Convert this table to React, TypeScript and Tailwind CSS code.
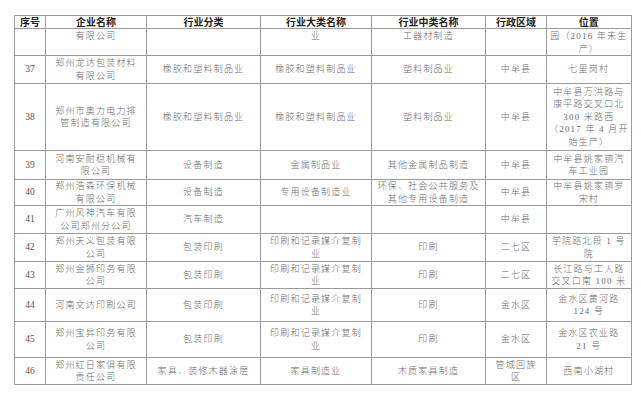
type Row = {
  no: string;
  cells: string[][];
  h: number;
  top?: boolean;
};

const headers = ["序号", "企业名称", "行业分类", "行业大类名称", "行业中类名称", "行政区域", "位置"];
const widths = [31, 101, 114, 111, 114, 61, 82];

const rows: Row[] = [
  {
    no: "",
    h: 27,
    top: true,
    cells: [["有限公司"], [], ["业"], ["工器材制造"], [], ["园（2016 年未生", "产）"]],
  },
  {
    no: "37",
    h: 28,
    cells: [["郑州龙达包装材料", "有限公司"], ["橡胶和塑料制品业"], ["橡胶和塑料制品业"], ["塑料制品业"], ["中牟县"], ["七里岗村"]],
  },
  {
    no: "38",
    h: 67,
    cells: [
      ["郑州市奥力电力排", "管制造有限公司"],
      ["橡胶和塑料制品业"],
      ["橡胶和塑料制品业"],
      ["塑料制品业"],
      ["中牟县"],
      ["中牟县万洪路与", "康平路交叉口北", "300 米路西", "（2017 年 4 月开", "始生产）"],
    ],
  },
  {
    no: "39",
    h: 29,
    cells: [["河南安耐稳机械有", "限公司"], ["设备制造"], ["金属制品业"], ["其他金属制品制造"], ["中牟县"], ["中牟县姚家镇汽", "车工业园"]],
  },
  {
    no: "40",
    h: 26,
    cells: [
      ["郑州浩森环保机械", "有限公司"],
      ["设备制造"],
      ["专用设备制造业"],
      ["环保、社会公共服务及", "其他专用设备制造"],
      ["中牟县"],
      ["中牟县姚家镇罗", "宋村"],
    ],
  },
  {
    no: "41",
    h: 28,
    cells: [["广州风神汽车有限", "公司郑州分公司"], ["汽车制造"], [], [], ["中牟县"], []],
  },
  {
    no: "42",
    h: 28,
    cells: [["郑州天义包装有限", "公司"], ["包装印刷"], ["印刷和记录媒介复制", "业"], ["印刷"], ["二七区"], ["学院路北段 1 号", "院"]],
  },
  {
    no: "43",
    h: 27,
    cells: [["郑州金狮印务有限", "公司"], ["包装印刷"], ["印刷和记录媒介复制", "业"], ["印刷"], ["二七区"], ["长江路与工人路", "交叉口南 100 米"]],
  },
  {
    no: "44",
    h: 33,
    cells: [["河南文达印刷公司"], ["包装印刷"], ["印刷和记录媒介复制", "业"], ["印刷"], ["金水区"], ["金水区黄河路", "124 号"]],
  },
  {
    no: "45",
    h: 36,
    cells: [["郑州宝昇印务有限", "公司"], ["包装印刷"], ["印刷和记录媒介复制", "业"], ["印刷"], ["金水区"], ["金水区农业路", "21 号"]],
  },
  {
    no: "46",
    h: 27,
    cells: [["郑州红日家俱有限", "责任公司"], ["家具、装修木器涂层"], ["家具制造业"], ["木质家具制造"], ["管城回族", "区"], ["西南小湖村"]],
  },
];

function Lines({ lines }: { lines: string[] }) {
  return (
    <>
      {lines.map((l, i) => (
        <div key={i} className="whitespace-nowrap">
          {l}
        </div>
      ))}
    </>
  );
}

export default function App() {
  return (
    <div className="h-[405px] w-[641px] bg-white pl-[14px] pt-[15px]">
      <table className="table-fixed border-collapse border border-[#9a9a9a] font-['Liberation_Serif','Noto_Sans_CJK_SC',serif] font-light text-[#6a6a6a]">
        <colgroup>
          {widths.map((w, i) => (
            <col key={i} style={{ width: w }} />
          ))}
        </colgroup>
        <thead>
          <tr className="h-[13px]">
            {headers.map((h) => (
              <th
                key={h}
                className="border border-[#9a9a9a] p-0 text-center font-['Noto_Sans_CJK_SC',sans-serif] text-[10px] leading-[12px] font-bold text-[#222]"
              >
                {h}
              </th>
            ))}
          </tr>
        </thead>
        <tbody>
          {rows.map((r, ri) => (
            <tr key={ri} style={{ height: r.h }}>
              <td
                className={`border border-[#9a9a9a] p-0 text-center text-[9.5px] leading-[12.5px] text-[#555] ${
                  r.top ? "align-top" : "align-middle"
                }`}
              >
                {r.no}
              </td>
              {r.cells.map((c, ci) => (
                <td
                  key={ci}
                  className={`border border-[#9a9a9a] px-[2px] py-0 text-center text-[9px] leading-[12.5px] tracking-[1.2px] ${
                    r.top ? "pt-[1px] align-top" : "align-middle"
                  }`}
                >
                  <Lines lines={c} />
                </td>
              ))}
            </tr>
          ))}
        </tbody>
      </table>
    </div>
  );
}
